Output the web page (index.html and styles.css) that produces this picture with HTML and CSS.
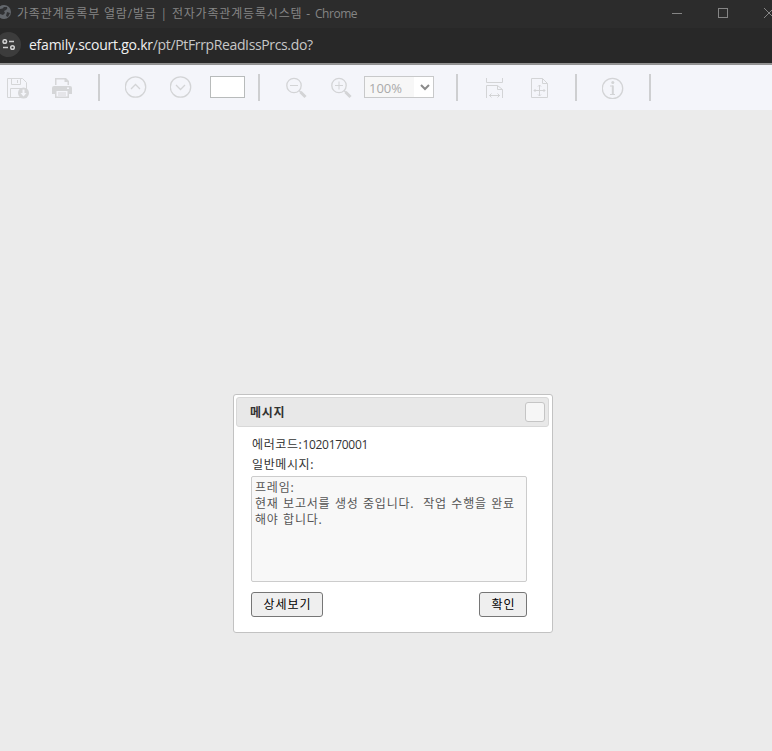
FILE: index.html
```html
<!DOCTYPE html>
<html lang="ko">
<head>
<meta charset="utf-8">
<title>가족관계등록부 열람/발급</title>
<link rel="stylesheet" href="styles.css">
</head>
<body>
<header class="titlebar">
  <svg class="globe" width="12" height="14" viewBox="0 0 12 14"><circle cx="4" cy="7" r="7" fill="#62666b"/><path d="M0 4q3 0 4-2h3q1 2-1 3l-2 1 1 2-2 2-3-1M7 7l3 1-2 4-2-1z" fill="#303133"/></svg>
  <span class="title">가족관계등록부 열람/발급 | 전자가족관계등록시스템 - <span class="app">Chrome</span></span>
  <svg class="controls" width="102" height="12" viewBox="0 0 102 12" fill="none" stroke="#858585" shape-rendering="crispEdges"><path d="M2 6.500h10M48.500 1.500h9v9h-9z"/><path d="M94 1l10 10M94 11L104 1" shape-rendering="auto"/></svg>
</header>
<div class="address">
  <span class="site"><svg width="14" height="12" viewBox="0 0 14 12" fill="none" stroke="#d0d0d0" stroke-width="1.500"><circle cx="2.800" cy="2.500" r="1.800"/><path d="M7 2.500h5M1 8.500h5"/><circle cx="10.500" cy="8.500" r="1.800"/></svg></span>
  <span class="url"><b>efamily.scourt.go.kr</b>/pt/PtFrrpReadIssPrcs.do?</span>
</div>
<nav class="toolbar">
  <svg class="save" width="23" height="22" viewBox="0 0 23 22" fill="none" stroke="#d5d6d8"><path d="M.5 1.500h15l4 4v15H.5zM4.500 1.500v6h9v-6M10.500 3v3M3.500 20v-8.500h13"/><circle cx="16.500" cy="16" r="5.500" fill="#d5d6d8" stroke="none"/><path d="M16.500 12.500v4" stroke="#f4f5fa" stroke-width="2"/><path d="M13.500 16h6l-3 3.500z" fill="#f4f5fa" stroke="none"/></svg>
  <svg class="print" width="20" height="22" viewBox="0 0 20 22" fill="#d5d6d8"><path d="M3 1h11l3 3v4H3zM4.500 2.500V8h11V5h-3V2.500zM2 9h16q2 0 2 2v6h-3v4H3v-4H0v-6q0-2 2-2zM4.500 14v5.500h11V14zM15 10.500v1.500h2v-1.500z" fill-rule="evenodd"/><path d="M6 15.500h8v1H6zM6 17.500h8v1H6z"/></svg>
  <i class="sep s1"></i>
  <svg class="up" width="22" height="22" viewBox="0 0 22 22" fill="none" stroke="#d3d4d6" stroke-width="1.300"><circle cx="10.500" cy="11" r="10.200"/><path d="M6 13l4.500-4.500L15 13"/></svg>
  <svg class="down" width="22" height="22" viewBox="0 0 22 22" fill="none" stroke="#d3d4d6" stroke-width="1.300"><circle cx="10.500" cy="11" r="10.200"/><path d="M6 9l4.500 4.500L15 9"/></svg>
  <span class="page"></span>
  <i class="sep s2"></i>
  <svg class="zout" width="21" height="22" viewBox="0 0 21 22" fill="none" stroke="#d3d4d6"><circle cx="8" cy="8.500" r="7.200" stroke-width="1.300"/><path d="M4 8.500h8"/><path d="M13 13.500l2 2" stroke-width="1.500"/><path d="M14.500 15l5 5" stroke-width="3"/></svg>
  <svg class="zin" width="21" height="22" viewBox="0 0 21 22" fill="none" stroke="#d3d4d6"><circle cx="8" cy="8.500" r="7.200" stroke-width="1.300"/><path d="M4 8.500h8M8 4.500v8"/><path d="M13 13.500l2 2" stroke-width="1.500"/><path d="M14.500 15l5 5" stroke-width="3"/></svg>
  <span class="select"><span class="value">100%</span><span class="arrow"><svg width="10" height="7" viewBox="0 0 10 7" fill="none" stroke="#8b8b8b" stroke-width="2"><path d="M1 1l4 4 4-4"/></svg></span></span>
  <i class="sep s3"></i>
  <svg class="fitw" width="17" height="21" viewBox="0 0 17 21" fill="none" stroke="#d3d4d6"><path d="M.5 1v4.500h16V1M.5 21V8.500h11l5 4V21M11.500 8.500v4h5M3 18.500h11M5.500 16.500l-2 2 2 2M11.500 16.500l2 2-2 2"/></svg>
  <svg class="fitp" width="17" height="21" viewBox="0 0 17 21" fill="none" stroke="#d3d4d6"><path d="M.5 1.500h11l5 5v14H.5zM11.500 1.500v5h5M8.500 8v11M3 13.500h11M7 9.500L8.500 8 10 9.500M7 17.500L8.500 19l1.500-1.500M4.500 12L3 13.500 4.500 15M12.500 12l1.500 1.500-1.500 1.500"/></svg>
  <i class="sep s4"></i>
  <svg class="info" width="22" height="22" viewBox="0 0 22 22" fill="none" stroke="#d3d4d6"><circle cx="10.500" cy="11.500" r="10.200" stroke-width="1.300"/><circle cx="10.800" cy="5.500" r="1.500" fill="#d3d4d6" stroke="none"/><path d="M8 9h3M8 17.500h5" stroke-width="1.200"/><path d="M10.800 8.500v9" stroke-width="2"/></svg>
  <i class="sep s5"></i>
</nav>
<main class="viewer">
  <section class="dialog">
    <div class="head"><span class="name">메시지</span><span class="close"></span></div>
    <div class="content">
      <div class="line code">에러코드:<span class="num">1020170001</span></div>
      <div class="line label">일반메시지:</div>
      <div class="message"><div>프레임:</div><div>현재 보고서를 생성 중입니다.&nbsp; 작업 수행을 완료</div><div>해야 합니다.</div></div>
      <div class="actions"><button class="detail">상세보기</button><button class="ok">확인</button></div>
    </div>
  </section>
</main>
</body>
</html>
```

FILE: styles.css
```css
* { box-sizing: border-box; }
body { margin: 0; width: 772px; height: 751px; overflow: hidden; background: #ebebeb; font: 12px/16px "Noto Sans", "Noto Sans CJK KR", sans-serif; }
svg { display: block; flex: none; }
.titlebar { height: 28px; background: #2c2c2c; display: flex; align-items: center; color: #858585; white-space: nowrap; }
.globe { margin: -4px 5px 0 0; }
.title { font-family: "Open Sans", "Noto Sans CJK KR", sans-serif; letter-spacing: .82px; }
.app { letter-spacing: -.45px; }
.controls { margin: -2px 0 0 auto; }
.address { height: 37px; background: #282828; border-bottom: 2px solid #929292; display: flex; align-items: center; color: #c7c7c7; }
.site { width: 25px; height: 25px; border-radius: 50%; background: #3c3c3c; margin: -2px 0 0 -4px; padding: 7px 0 0 6px; flex: none; }
.url { font: 14px/20px "Open Sans", sans-serif; letter-spacing: -.36px; margin: -2px 0 0 8px; white-space: nowrap; }
.url b { font-weight: 400; letter-spacing: -.24px; color: #f0f0f0; }
.toolbar { height: 45px; background: #f4f5fa; display: flex; align-items: center; }
.sep { width: 2px; height: 27px; background: #cecfd1; flex: none; }
.save { margin-left: 7px; }
.print { margin-left: 22px; }
.s1 { margin-left: 26px; }
.up { margin: -1px 0 0 25px; }
.down { margin: -1px 0 0 23px; }
.page { width: 35px; height: 22px; margin: -1px 0 0 18px; border: 1px solid #b8bbbb; background: #fff; }
.s2 { margin-left: 13px; }
.zout { margin-left: 26px; }
.zin { margin-left: 24px; }
.select { width: 70px; height: 22px; margin: -1px 0 0 12px; border: 1px solid #c8c9ca; background: #f7f7f7; display: flex; color: #aaa; }
.value { width: 49px; padding-left: 4px; font: 13px/22px "Open Sans", sans-serif; }
.arrow { width: 19px; background: #fff; padding: 7px 0 0 6px; }
.s3 { margin-left: 22px; }
.fitw { margin-left: 28px; }
.fitp { margin-left: 28px; }
.s4 { margin-left: 27px; }
.info { margin-left: 25px; }
.s5 { margin-left: 25px; }
.viewer { height: 641px; padding: 284px 0 0 233px; background: #ebebeb; }
.dialog { width: 320px; height: 239px; border: 1px solid #c2c2c2; border-radius: 3px; background: #fff; padding: 2px; color: #333; }
.head { height: 30px; width: 313px; border: 1px solid #d8d8d8; border-radius: 3px; background: #e8e8e8; display: flex; align-items: center; justify-content: space-between; padding: 0 3px 0 13px; }
.name { font-weight: 700; letter-spacing: .7px; padding-top: 1px; color: #333; }
.close { width: 20px; height: 20px; border: 1px solid #c5c5c5; border-radius: 3px; background: #f6f6f6; }
.content { width: 276px; margin: 7px 0 0 15px; }
.line { height: 20px; line-height: 22px; padding-left: 1px; letter-spacing: .6px; white-space: nowrap; }
.num { font-family: "Open Sans", sans-serif; letter-spacing: -.3px; }
.message { height: 106px; margin-top: 2px; border: 1px solid #ccc; border-radius: 2px; background: #f8f8f8; padding: 3px; color: #555; letter-spacing: .8px; word-spacing: .5px; line-height: 16px; white-space: nowrap; }
.actions { display: flex; justify-content: space-between; margin-top: 10px; }
button { height: 25px; padding: 0; border: 1px solid #767676; border-radius: 3px; background: #efefef; color: #000; font: inherit; letter-spacing: .9px; }
.detail { width: 72px; padding-left: 1px; }
.ok { width: 48px; padding-left: 1px; }
```
